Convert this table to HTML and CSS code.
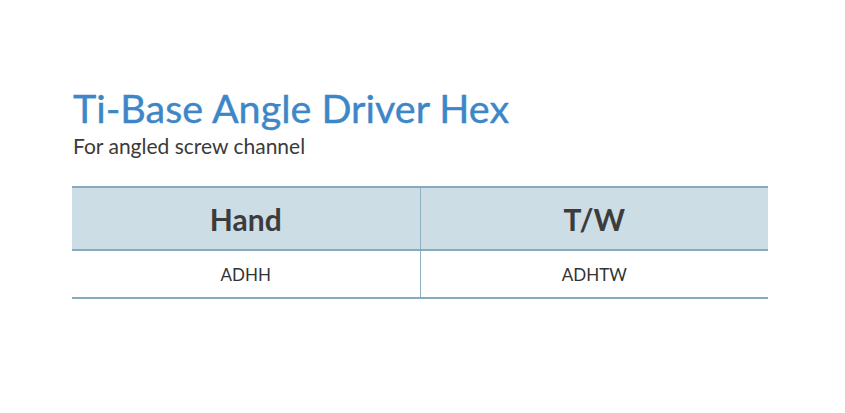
FILE: index.html
```html
<!DOCTYPE html>
<html>
<head>
<meta charset="utf-8">
<link rel="stylesheet" href="styles.css">
</head>
<body>
<div class="page">
  <h1 class="title">Ti-Base Angle Driver Hex</h1>
  <p class="subtitle">For angled screw channel</p>
  <table class="spec">
    <thead>
      <tr><th>Hand</th><th>T/W</th></tr>
    </thead>
    <tbody>
      <tr><td>ADHH</td><td>ADHTW</td></tr>
    </tbody>
  </table>
</div>
</body>
</html>
```
FILE: styles.css
```css
html, body {
  margin: 0;
  padding: 0;
  background: #ffffff;
}
.page {
  padding: 84px 0 0 72px;
  width: 696px;
  font-family: "Lato", "Open Sans", sans-serif;
}
.title {
  margin: 0;
  font-size: 39.5px;
  line-height: 48px;
  font-weight: 400;
  color: #3d87c8;
  padding-left: 1px;
  -webkit-text-stroke: 0.4px #3d87c8;
}
.subtitle {
  margin: 0;
  font-size: 21px;
  line-height: 28px;
  font-weight: 400;
  color: #3a3a3a;
  padding-left: 1px;
}
.spec {
  margin-top: 26px;
  width: 696px;
  border-collapse: collapse;
  table-layout: fixed;
  border-top: 2px solid #86aabe;
  border-bottom: 2px solid #86aabe;
}
.spec th {
  background: #ccdde6;
  height: 61px;
  padding: 0;
  font-size: 30px;
  font-weight: 700;
  color: #3c3c3c;
  border-bottom: 2px solid #86aabe;
}
.spec td {
  height: 46px;
  padding: 0;
  text-align: center;
  font-size: 17px;
  font-weight: 400;
  color: #333333;
}
.spec th + th, .spec td + td {
  border-left: 1px solid #8fb0c3;
}
```
